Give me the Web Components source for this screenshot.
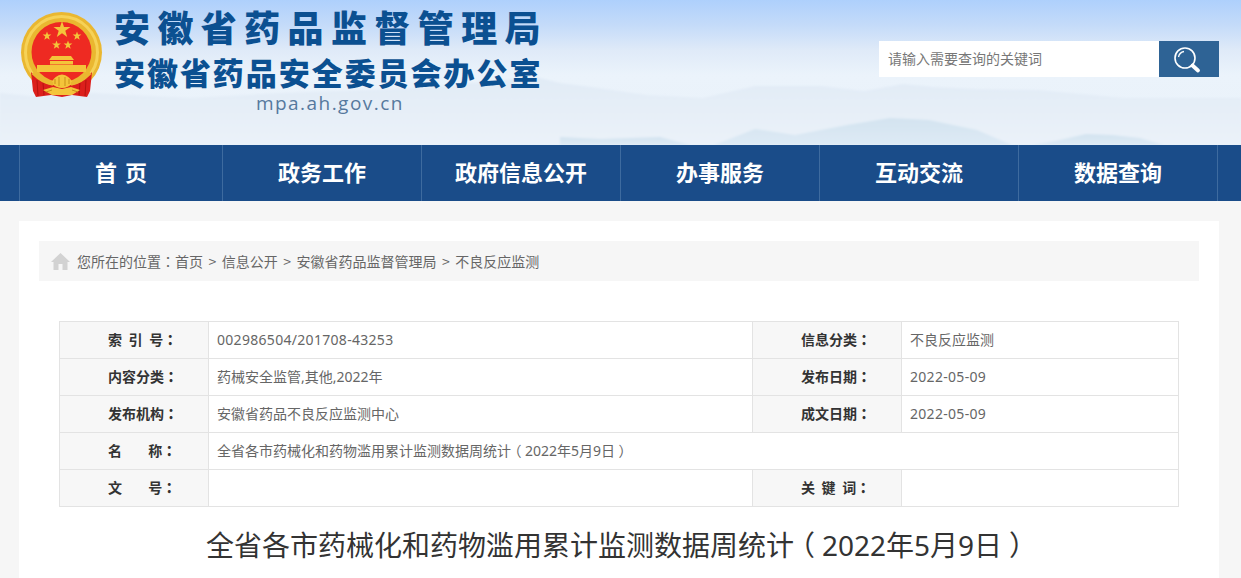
<!DOCTYPE html>
<html lang="zh-CN">
<head>
<meta charset="utf-8">
<title>全省各市药械化和药物滥用累计监测数据周统计</title>
<style>
html, body { margin: 0; height: 578px; overflow: hidden; background: #f6f6f6; }
body { font-family: "Noto Sans", "Noto Sans CJK SC", sans-serif; font-size: 14px; color: #666; text-spacing-trim: space-all; }
/* the fullwidth brackets sit in the middle of their square in the reference */
.br { font-feature-settings: "halt"; margin: 0 .25em; }
</style>
</head>
<body>
<site-header></site-header>
<main-nav>
  <nav-item style="width:204px" first>首 页</nav-item>
  <nav-item>政务工作</nav-item>
  <nav-item>政府信息公开</nav-item>
  <nav-item>办事服务</nav-item>
  <nav-item>互动交流</nav-item>
  <nav-item>数据查询</nav-item>
</main-nav>
<page-card>
  <bread-crumb>
    <span>首页</span><span>信息公开</span><span>安徽省药品监督管理局</span><span>不良反应监测</span>
  </bread-crumb>
  <info-table>
    <info-label>索 引 号</info-label><info-value num>002986504/201708-43253</info-value>
    <info-label>信息分类</info-label><info-value>不良反应监测</info-value>
    <info-label>内容分类</info-label><info-value>药械安全监管,其他,2022年</info-value>
    <info-label>发布日期</info-label><info-value num>2022-05-09</info-value>
    <info-label>发布机构</info-label><info-value>安徽省药品不良反应监测中心</info-value>
    <info-label>成文日期</info-label><info-value num>2022-05-09</info-value>
    <info-label>名    称</info-label><info-value wide>全省各市药械化和药物滥用累计监测数据周统计<span class="br">（</span>2022年5月9日<span class="br">）</span></info-value>
    <info-label>文    号</info-label><info-value></info-value>
    <info-label>关 键 词</info-label><info-value></info-value>
  </info-table>
  <article-title>全省各市药械化和药物滥用累计监测数据周统计<span class="br">（</span>2022年5月9日<span class="br">）</span></article-title>
</page-card>

<script>
const emblem = `<svg width="83" height="87" viewBox="20 11 83 87" aria-hidden="true">
  <circle cx="61.5" cy="52.5" r="40.5" fill="#eab730"/>
  <circle cx="61.5" cy="52.5" r="36" fill="none" stroke="#f6d257" stroke-width="3"/>
  <circle cx="61.5" cy="52" r="30" fill="#ee2a22"/>
  <path fill="#dc1f1c" d="M31 72 C37 79 45 84 52 85 L72 85 C79 84 86 79 92 72 L90 91 L87 97 L72 95 L62 97 L51 95 L36 97 L33 91 Z"/>
  <path d="M37 80 L38 96 M43 83 L44 95 M80 83 L79 95 M86 80 L85 96" stroke="#b5130f" stroke-width="1" fill="none"/>
  <g fill="#f4c43a">
    <path d="M62 21 L64 27 H70.5 L65.3 30.8 L67.2 37 L62 33.2 L56.8 37 L58.7 30.8 L53.5 27 H60 Z"/>
    <path d="M47 31.5 L48.1 34.6 H51.4 L48.7 36.6 L49.7 39.8 L47 37.9 L44.3 39.8 L45.3 36.6 L42.6 34.6 H45.9 Z"/>
    <path d="M77 31.5 L78.1 34.6 H81.4 L78.7 36.6 L79.7 39.8 L77 37.9 L74.3 39.8 L75.3 36.6 L72.6 34.6 H75.9 Z"/>
    <path d="M56.5 40.5 L57.6 43.6 H60.9 L58.2 45.6 L59.2 48.8 L56.5 46.9 L53.8 48.8 L54.8 45.6 L52.1 43.6 H55.4 Z"/>
    <path d="M68 40.5 L69.1 43.6 H72.4 L69.7 45.6 L70.7 48.8 L68 46.9 L65.3 48.8 L66.3 45.6 L63.6 43.6 H66.9 Z"/>
    <path d="M52 56 H71 L74 60 H49 Z"/>
    <path d="M50 61 H73 V64.5 H50 Z"/>
    <path d="M37 65 H86 V72 H37 Z"/>
    <path d="M43 90 L53 87 L62 89 L71 87 L80 90 L72 95 H52 Z"/>
    <path d="M51 83 Q55 75 62 74.5 Q69 75 73 83 Q68 88 62 88 Q56 88 51 83 Z"/>
  </g>
  <path d="M33 73 C39 79 46 83 53 84 M90 73 C84 79 78 83 71 84" stroke="#eab730" stroke-width="3.4" fill="none"/>
  <path d="M55 84 V79 M59 86 V77 M65 86 V77 M69 84 V79" stroke="#c98f18" stroke-width="1"/>
  <path d="M46 92 L52 90 M78 92 L72 90" stroke="#c98f18" stroke-width="1"/>
</svg>`;

const headerTpl = document.createElement("template");
headerTpl.innerHTML = `<style>
:host {
  display: flex;
  position: relative;
  height: 145px;
  overflow: hidden;
  background: linear-gradient(#aed0fc 0, #c4dbf9 25px, #dfeaf8 50px, #ebf3fb 75px, #e9f1f9 145px);
}
.hills { position: absolute; left: 0; top: 0; }
.logo { position: relative; margin: 11px 0 0 20px; width: 83px; height: 87px; }
.names { position: relative; margin: 5px 0 0 11px; color: #0b5091; font-family: "Noto Sans CJK SC", sans-serif; font-weight: 900; white-space: nowrap; }
.n1 { font-size: 36px; line-height: 42px; letter-spacing: 7.4px; }
.n2 { font-size: 31px; line-height: 40px; letter-spacing: 1.95px; margin-top: 5px; }
.url { font-family: "Open Sans", sans-serif; font-weight: 400; font-size: 19px; line-height: 22px; letter-spacing: 1.45px; color: #56799e; margin: 0 0 0 142px; }
search-box { position: relative; margin: 41px 22px 0 auto; }
</style>
<svg class="hills" width="1241" height="145" viewBox="0 0 1241 145" aria-hidden="true">
  <defs>
    <filter id="soft"><feGaussianBlur stdDeviation=".8"/></filter>
    <linearGradient id="fade" x1="0" y1="0" x2="0" y2="1">
      <stop offset="0" stop-color="#e1ebf6"/><stop offset="1" stop-color="#ebf2f9"/>
    </linearGradient>
    <linearGradient id="near" x1="0" y1="0" x2="0" y2="1">
      <stop offset="0" stop-color="#d3e3f0"/><stop offset="1" stop-color="#deeaf5"/>
    </linearGradient>
  </defs>
  <g filter="url(#soft)">
    <path d="M0 93 L40 97 L93 93 L190 98 L280 93 L420 88 L536 77 L560 83 L599 88 L625 92 L647 95 L703 98 L755 86 L821 86 L864 91 L903 84 L934 87 L977 89 L1038 90 L1125 98 L1241 98 V145 H0 Z" fill="url(#fade)"/>
    <path d="M560 137 L600 139 L660 137 L690 145 H560 Z" fill="url(#near)"/>
    <path d="M714 145 L755 129 L795 135 L847 125 L890 118 L929 120 L977 130 L1012 145 Z" fill="url(#near)"/>
    <path d="M1033 145 L1055 141 L1086 134 L1112 135 L1140 138 L1164 145 Z" fill="url(#near)"/>
  </g>
</svg>
<div class="logo">${emblem}</div>
<div class="names">
  <div class="n1">安徽省药品监督管理局</div>
  <div class="n2">安徽省药品安全委员会办公室</div>
  <div class="url">mpa.ah.gov.cn</div>
</div>
<search-box></search-box>`;

class SiteHeader extends HTMLElement {
  constructor() {
    super();
    this.attachShadow({ mode: "open" }).appendChild(headerTpl.content.cloneNode(true));
  }
}

const searchTpl = document.createElement("template");
searchTpl.innerHTML = `<style>
:host { display: flex; width: 340px; height: 36px; }
.field { flex: 1; background: #fff; padding-left: 9px; font: 14px/35px "Noto Sans CJK SC", sans-serif; color: #777; }
.btn { width: 60px; background: #2e6395; display: flex; align-items: center; justify-content: center; }
svg { margin: 2px 4px 0 0; }
</style>
<div class="field">请输入需要查询的关键词</div>
<div class="btn">
  <svg width="28" height="28" viewBox="0 0 28 28" fill="none" stroke="#fff" aria-hidden="true">
    <circle cx="12" cy="12" r="10" stroke-width="1.6"/>
    <path d="M5.5 11 A7 7 0 0 1 11 5.5" stroke-width="1.3"/>
    <path d="M19.5 19.5 L25 24.5" stroke-width="3.8" stroke-linecap="round"/>
  </svg>
</div>`;

class SearchBox extends HTMLElement {
  constructor() {
    super();
    this.attachShadow({ mode: "open" }).appendChild(searchTpl.content.cloneNode(true));
  }
}

const navTpl = document.createElement("template");
navTpl.innerHTML = `<style>
:host { display: flex; height: 56px; padding-left: 19px; background: #1a4c89; }
</style>
<slot></slot>`;

class MainNav extends HTMLElement {
  constructor() {
    super();
    this.attachShadow({ mode: "open" }).appendChild(navTpl.content.cloneNode(true));
  }
}

const navItemTpl = document.createElement("template");
navItemTpl.innerHTML = `<style>
:host {
  display: block;
  box-sizing: border-box;
  width: 199px;
  height: 56px;
  border-right: 1px solid #3e6b9f;
  text-align: center;
  font: 700 22px/53px "Noto Sans CJK SC", sans-serif;
  color: #fff;
  white-space: nowrap;
}
:host([first]) { border-left: 1px solid #3e6b9f; word-spacing: 3px; }
</style>
<slot></slot>`;

class NavItem extends HTMLElement {
  constructor() {
    super();
    this.attachShadow({ mode: "open" }).appendChild(navItemTpl.content.cloneNode(true));
  }
}

const cardTpl = document.createElement("template");
cardTpl.innerHTML = `<style>
:host { display: block; box-sizing: border-box; width: 1200px; margin: 20px 0 0 19px; padding: 20px; background: #fff; }
</style>
<slot></slot>`;

class PageCard extends HTMLElement {
  constructor() {
    super();
    this.attachShadow({ mode: "open" }).appendChild(cardTpl.content.cloneNode(true));
  }
}

const crumbTpl = document.createElement("template");
crumbTpl.innerHTML = `<style>
:host {
  display: flex;
  align-items: center;
  height: 39px;
  padding: 0 0 1px 12px;
  background: #f6f6f6;
  font: 14px/38px "Noto Sans CJK SC", sans-serif;
  color: #666;
}
svg { margin: 1px 7px 0 0; flex: none; }
.here { white-space: nowrap; }
.here b { font-family: "Noto Sans CJK TC", sans-serif; font-weight: 400; }
::slotted(span:not(:last-child))::after { content: ">"; margin: 0 5.5px; }
</style>
<svg width="19" height="17" viewBox="0 0 19 17" aria-hidden="true">
  <path fill="#d2d2d2" d="M9.5 0 L19 9 H16.5 V17 H11.5 V11 H7.5 V17 H2.5 V9 H0 Z"/>
</svg>
<span class="here">您所在的位置<b lang="zh-TW">：</b></span><slot></slot>`;

class BreadCrumb extends HTMLElement {
  constructor() {
    super();
    this.attachShadow({ mode: "open" }).appendChild(crumbTpl.content.cloneNode(true));
  }
}

const tableTpl = document.createElement("template");
tableTpl.innerHTML = `<style>
:host {
  display: grid;
  grid-template-columns: 149px 544px 149px 277px;
  grid-auto-rows: 37px;
  margin: 40px 20px 0;
  border-top: 1px solid #e3e3e3;
  border-left: 1px solid #e3e3e3;
}
</style>
<slot></slot>`;

class InfoTable extends HTMLElement {
  constructor() {
    super();
    this.attachShadow({ mode: "open" }).appendChild(tableTpl.content.cloneNode(true));
  }
}

const labelTpl = document.createElement("template");
labelTpl.innerHTML = `<style>
:host {
  display: block;
  box-sizing: border-box;
  padding-left: 48px;
  background: #f7f7f7;
  border-right: 1px solid #e3e3e3;
  border-bottom: 1px solid #e3e3e3;
  font: 700 14px/35px "Noto Sans CJK SC", sans-serif;
  color: #333;
}
.t { white-space: pre; word-spacing: 3.4px; }
b { font-family: "Noto Sans CJK TC", sans-serif; }
</style>
<span class="t"><slot></slot><b lang="zh-TW">：</b></span>`;

class InfoLabel extends HTMLElement {
  constructor() {
    super();
    this.attachShadow({ mode: "open" }).appendChild(labelTpl.content.cloneNode(true));
  }
}

const valueTpl = document.createElement("template");
valueTpl.innerHTML = `<style>
:host {
  display: block;
  box-sizing: border-box;
  padding-left: 8px;
  border-right: 1px solid #e3e3e3;
  border-bottom: 1px solid #e3e3e3;
  font: 14px/36px "Noto Sans", "Noto Sans CJK SC", sans-serif;
  color: #666;
  white-space: nowrap;
}
:host([wide]) { grid-column: span 3; }
:host([num]) { letter-spacing: .3px; }
</style>
<slot></slot>`;

class InfoValue extends HTMLElement {
  constructor() {
    super();
    this.attachShadow({ mode: "open" }).appendChild(valueTpl.content.cloneNode(true));
  }
}

const titleTpl = document.createElement("template");
titleTpl.innerHTML = `<style>
:host {
  display: block;
  margin-top: 15px;
  padding-right: 2px;
  text-align: center;
  font: 28px/46px "Noto Sans", "Noto Sans CJK SC", sans-serif;
  color: #333;
  white-space: nowrap;
}
</style>
<slot></slot>`;

class ArticleTitle extends HTMLElement {
  constructor() {
    super();
    this.attachShadow({ mode: "open" }).appendChild(titleTpl.content.cloneNode(true));
  }
}

customElements.define("search-box", SearchBox);
customElements.define("site-header", SiteHeader);
customElements.define("main-nav", MainNav);
customElements.define("nav-item", NavItem);
customElements.define("page-card", PageCard);
customElements.define("bread-crumb", BreadCrumb);
customElements.define("info-table", InfoTable);
customElements.define("info-label", InfoLabel);
customElements.define("info-value", InfoValue);
customElements.define("article-title", ArticleTitle);
</script>
</body>
</html>
